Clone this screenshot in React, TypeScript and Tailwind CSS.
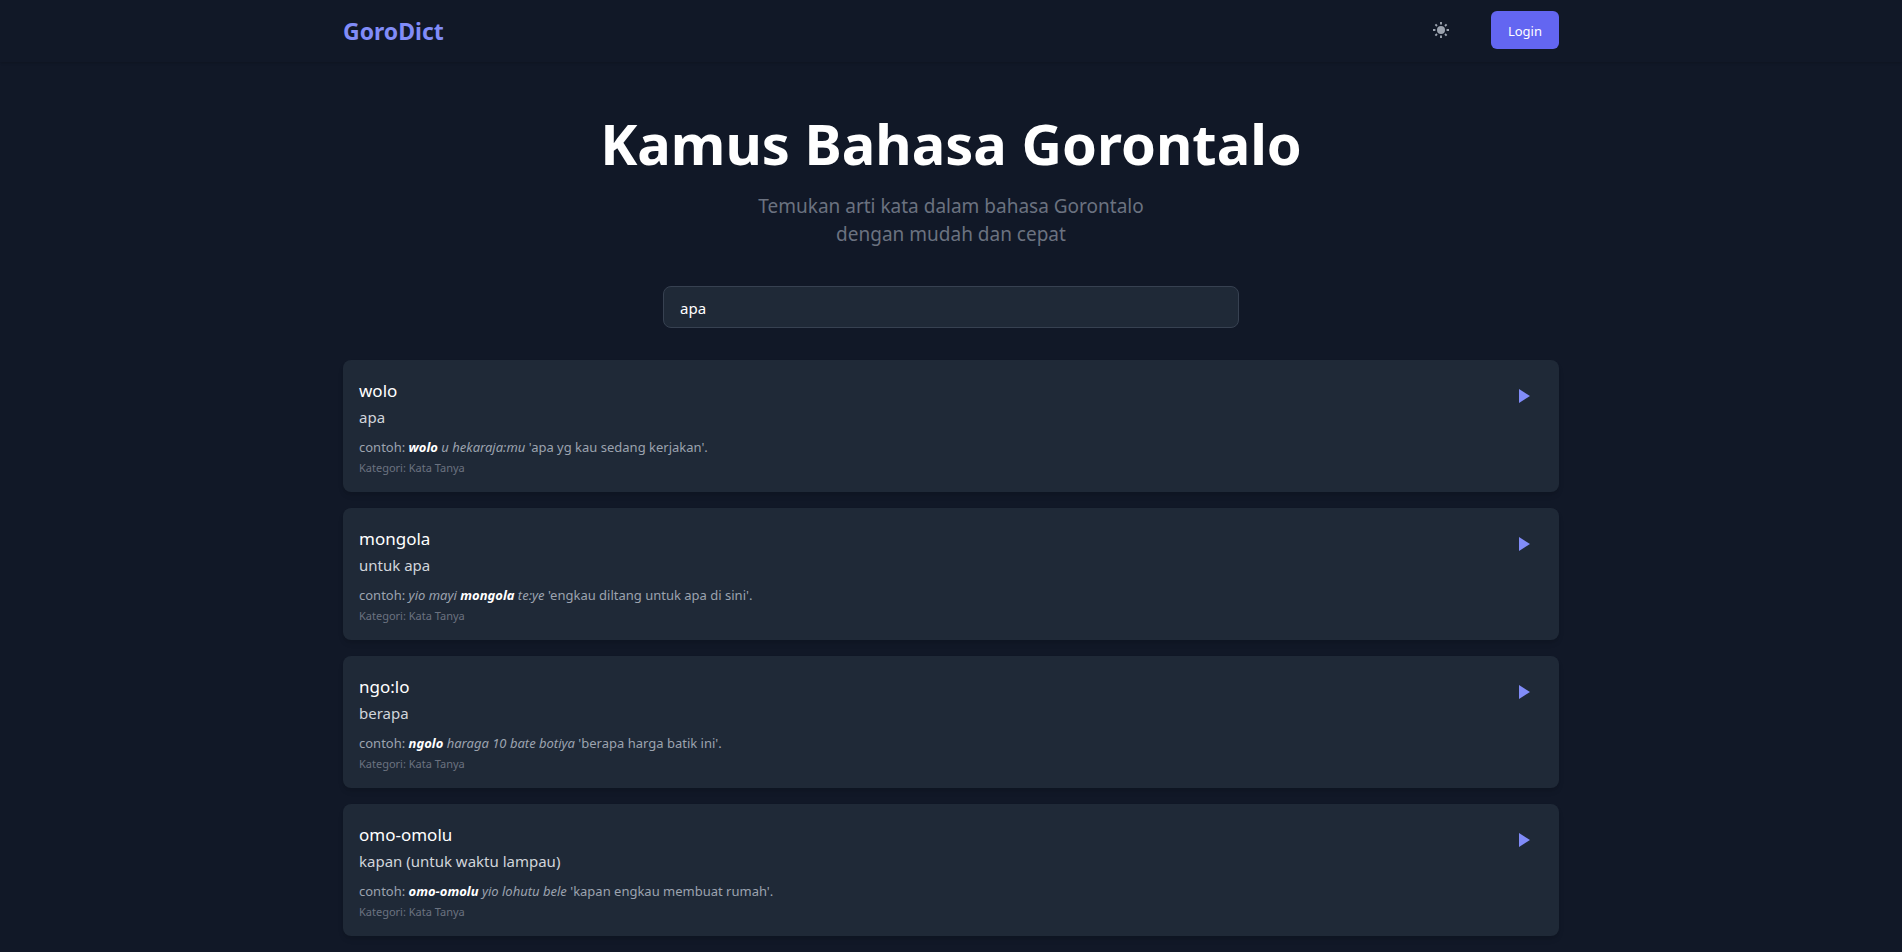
import { useState } from "react";

type Entry = {
  word: string;
  meaning: string;
  before?: string;
  highlight: string;
  after: string;
  translation: string;
};

const entries: Entry[] = [
  { word: "wolo", meaning: "apa", highlight: "wolo", after: " u hekaraja:mu", translation: "'apa yg kau sedang kerjakan'." },
  { word: "mongola", meaning: "untuk apa", before: "yio mayi ", highlight: "mongola", after: " te:ye", translation: "'engkau diltang untuk apa di sini'." },
  { word: "ngo:lo", meaning: "berapa", highlight: "ngolo", after: " haraga 10 bate botiya", translation: "'berapa harga batik ini'." },
  { word: "omo-omolu", meaning: "kapan (untuk waktu lampau)", highlight: "omo-omolu", after: " yio lohutu bele", translation: "'kapan engkau membuat rumah'." },
];

function SunIcon() {
  return (
    <svg viewBox="0 0 20 20" fill="currentColor" className="size-5" aria-hidden="true">
      <circle cx="10" cy="10" r="4" />
      <path
        d="M10 2v2.4M10 15.6V18M2 10h2.4M15.6 10H18M4.4 4.4l1.6 1.6M14 14l1.6 1.6M4.4 15.6L6 14M14 6l1.6-1.6"
        stroke="currentColor"
        strokeWidth="1.9"
      />
    </svg>
  );
}

function EntryCard({ entry }: { entry: Entry }) {
  return (
    <li className="flex items-start justify-between rounded-lg bg-[#1f2937] p-4 shadow-md">
      <div>
        <h2 className="text-[17px] leading-[29px] text-white">{entry.word}</h2>
        <p className="text-[15px] leading-6 text-[#d1d5db]">{entry.meaning}</p>
        <p className="mt-2 text-[13px] leading-5 text-[#9ca3af]">
          contoh:{" "}
          <em>
            {entry.before}
            <strong className="font-bold text-white">{entry.highlight}</strong>
            {entry.after}
          </em>{" "}
          {entry.translation}
        </p>
        <p className="mt-[3px] text-[11px] leading-4 text-[#6b7280]">Kategori: Kata Tanya</p>
      </div>
      <button type="button" aria-label={`Putar ${entry.word}`} className="p-2 text-[#818cf8]">
        <svg viewBox="0 0 24 24" fill="currentColor" className="size-6" aria-hidden="true">
          <path d="M8 5v14l11-7z" />
        </svg>
      </button>
    </li>
  );
}

export default function App() {
  const [query, setQuery] = useState("apa");
  return (
    <div className="min-h-screen bg-[#111827] font-['Segoe_UI','Noto_Sans',sans-serif]">
      <header className="bg-[#111827] shadow-sm">
        <div className="mx-auto flex max-w-7xl items-center justify-between px-8 pt-[11px] pb-[13px]">
          <a href="#" className="pt-[2px] text-[23px] leading-8 font-bold text-[#818cf8]">GoroDict</a>
          <div className="flex items-center gap-8">
            <button type="button" aria-label="Ganti tema" className="p-2 text-[#9ca3af]">
              <SunIcon />
            </button>
            <button type="button" className="rounded-md bg-[#6366f1] px-[17px] pt-[10px] pb-2 text-[13px] leading-5 text-white">Login</button>
          </div>
        </div>
      </header>
      <main className="mx-auto max-w-7xl px-8 pt-12 pb-4">
        <h1 className="text-center text-[56px] leading-[66px] font-bold text-white">Kamus Bahasa Gorontalo</h1>
        <p className="mx-auto mt-4 max-w-md text-center text-[19px] leading-7 text-[#6b7280]">
          Temukan arti kata dalam bahasa Gorontalo <br />
          dengan mudah dan cepat
        </p>
        <input
          type="text"
          aria-label="Cari kata"
          value={query}
          onChange={(e) => setQuery(e.target.value)}
          className="mx-auto mt-[38px] block w-full max-w-xl rounded-lg border border-[#374151] bg-[#1f2937] px-4 pt-[9px] pb-[7px] text-[15px] leading-6 text-white"
        />
        <ul className="mt-8 flex flex-col gap-4">
          {entries.map((entry) => (
            <EntryCard key={entry.word} entry={entry} />
          ))}
        </ul>
      </main>
    </div>
  );
}
